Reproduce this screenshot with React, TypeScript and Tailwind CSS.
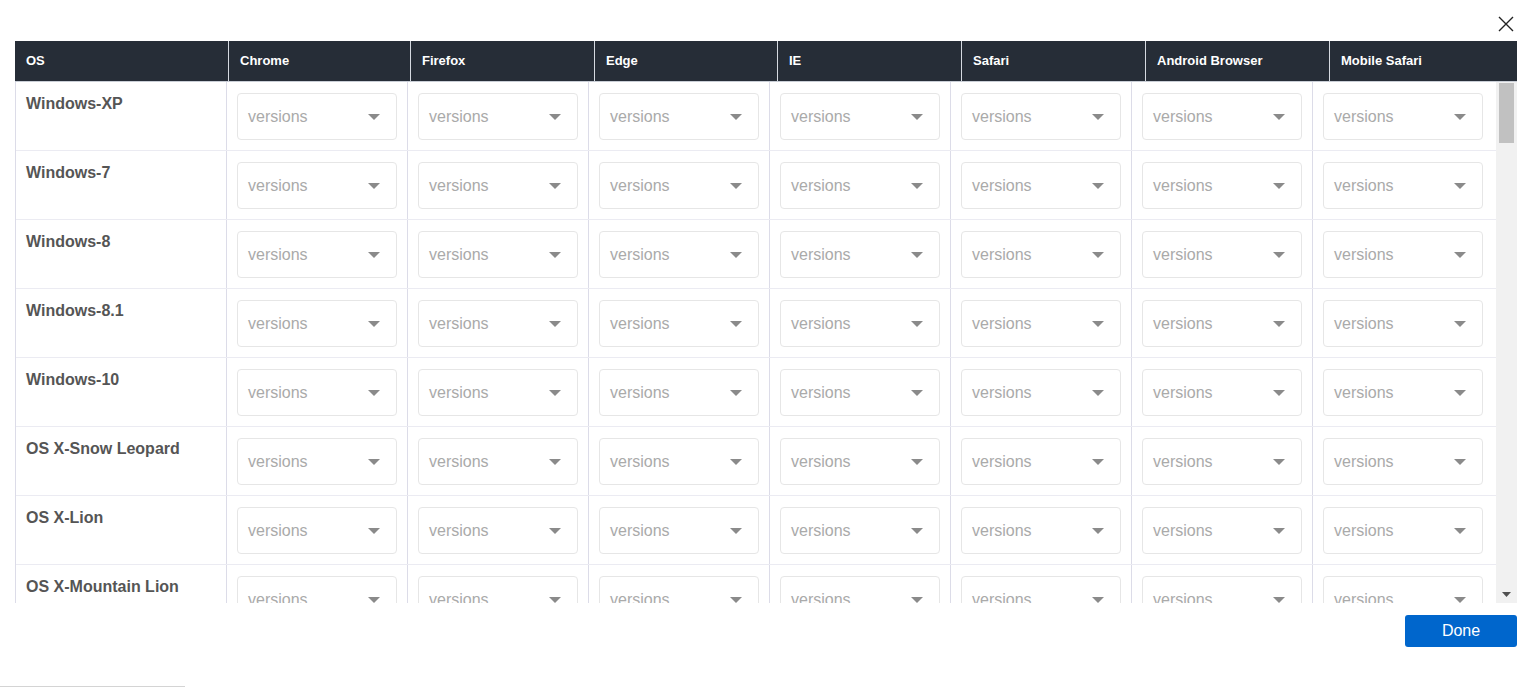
import React from "react";

const BROWSERS = [
  "Chrome",
  "Firefox",
  "Edge",
  "IE",
  "Safari",
  "Android Browser",
  "Mobile Safari",
];

const OS_LIST = [
  "Windows-XP",
  "Windows-7",
  "Windows-8",
  "Windows-8.1",
  "Windows-10",
  "OS X-Snow Leopard",
  "OS X-Lion",
  "OS X-Mountain Lion",
];

// header columns are slightly wider than body ones (body loses the scrollbar)
const HEAD_WIDTHS = [213, 182, 184, 183, 184, 184, 184, 188];

function VersionSelect() {
  return (
    <div className="flex h-[47px] w-[160px] items-center justify-between rounded-[4px] border border-[#e6e6e6] bg-white pl-[10px] pr-[16px]">
      <span className="text-[16px] text-[#aaaaaa]">versions</span>
      <svg width="12" height="6" viewBox="0 0 12 6">
        <path d="M0 0 L12 0 L6 6 Z" fill="#8a8a8a" />
      </svg>
    </div>
  );
}

function Scrollbar() {
  return (
    <div className="flex w-[21px] shrink-0 flex-col bg-[#f1f1f1]">
      <div className="mx-[3px] mt-px h-[60px] bg-[#c1c1c1]" />
      <div className="flex-1" />
      <div className="flex h-[17px] items-center justify-center">
        <svg width="9" height="5" viewBox="0 0 9 5">
          <path d="M0 0 L9 0 L4.5 5 Z" fill="#505050" />
        </svg>
      </div>
    </div>
  );
}

export default function App() {
  return (
    <div
      className="relative h-[687px] w-[1530px] overflow-hidden bg-white"
      style={{ fontFamily: '"Liberation Sans", Arial, sans-serif' }}
    >
      <div className="flex h-[41px] justify-end pr-[16px] pt-[16px]">
        <svg width="16" height="16" viewBox="0 0 16 16">
          <path d="M1 1 L15 15 M15 1 L1 15" stroke="#222" strokeWidth="1.4" />
        </svg>
      </div>

      <div className="ml-[15px] w-[1502px]">
        {/* header */}
        <div className="flex h-[41px] border-b border-[#c9ced6] bg-[#262d37]">
          {["OS", ...BROWSERS].map((h, i) => (
            <div
              key={h}
              className={`flex items-center px-[11px] pb-px text-[13px] font-bold text-white ${i > 0 ? "border-l border-[#d5d9e0]" : ""}`}
              style={{ width: HEAD_WIDTHS[i] }}
            >
              {h}
            </div>
          ))}
        </div>

        {/* body */}
        <div className="flex h-[521px] overflow-hidden">
          <div className="w-[1481px] shrink-0 border-l border-[#dcdce8]">
            {OS_LIST.map((os) => (
              <div key={os} className="flex h-[69px] shrink-0 border-b border-[#ebebf2]">
                <div className="w-[210px] shrink-0 px-[10px] pt-[10px] text-[16px] font-bold text-[#555555]">
                  {os}
                </div>
                {BROWSERS.map((b) => (
                  <div
                    key={b}
                    className="w-[181px] shrink-0 border-l border-[#dcdce8] pl-[10px] pt-[11px]"
                  >
                    <VersionSelect />
                  </div>
                ))}
              </div>
            ))}
          </div>
          <Scrollbar />
        </div>

        <div className="flex justify-end pt-[12px]">
          <button className="h-[32px] w-[112px] rounded-[3px] bg-[#0066cc] text-[16px] text-white">
            Done
          </button>
        </div>
      </div>

      <div className="absolute bottom-0 left-0 h-px w-[185px] bg-[#d4d4d4]" />
    </div>
  );
}
